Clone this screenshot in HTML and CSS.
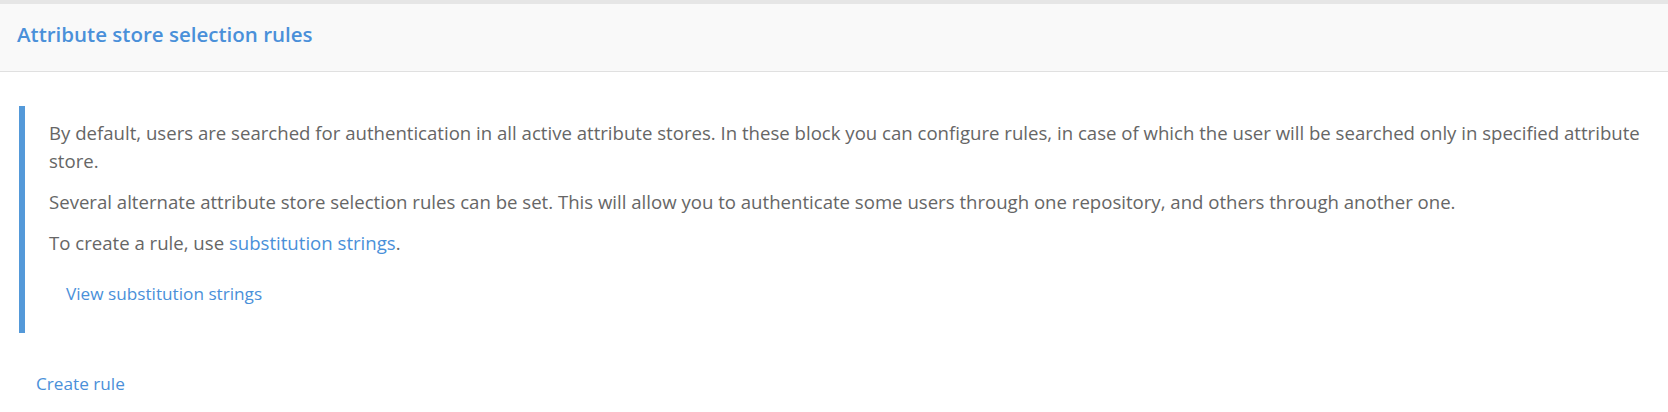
FILE: index.html
```html
<!DOCTYPE html>
<html lang="en">
<head>
<meta charset="utf-8">
<title>Attribute store selection rules</title>
<link rel="stylesheet" href="styles.css">
</head>
<body>
<div class="page">
  <div class="panel-header">
    <h2 class="panel-title">Attribute store selection rules</h2>
  </div>
  <div class="panel-body">
    <div class="note">
      <p>By default, users are searched for authentication in all active attribute stores. In these block you can configure rules, in case of which the user will be searched only in specified attribute store.</p>
      <p>Several alternate attribute store selection rules can be set. This will allow you to authenticate some users through one repository, and others through another one.</p>
      <p>To create a rule, use <a href="#" class="link">substitution strings</a>.</p>
      <a href="#" class="link view-link">View substitution strings</a>
    </div>
    <a href="#" class="link create-link">Create rule</a>
  </div>
</div>
</body>
</html>
```

FILE: styles.css
```css
html, body {
  margin: 0;
  padding: 0;
  background: #ffffff;
}
body {
  font-family: "Open Sans", "Liberation Sans", sans-serif;
  color: #666666;
}
.page {
  border-top: 4px solid #e6e6e6;
}
.panel-header {
  box-sizing: border-box;
  height: 68px;
  background: #f9f9f9;
  border-bottom: 1px solid #e0e0e0;
  padding: 16px 18px 0 17px;
}
.panel-title {
  margin: 0;
  font-size: 20.5px;
  line-height: 28px;
  font-weight: 600;
  color: #4a90d9;
}
.panel-body {
  padding: 34px 10px 20px 19px;
}
.note {
  border-left: 6px solid #5499d9;
  padding: 13px 0 27px 24px;
}
.note p {
  margin: 0 0 13px 0;
  font-size: 18.6px;
  line-height: 28px;
}
.link {
  color: #4a90d9;
  text-decoration: none;
}
.view-link {
  display: block;
  width: max-content;
  margin: 25px 0 0 17px;
  font-size: 17.2px;
  line-height: 24px;
}
.create-link {
  display: block;
  width: max-content;
  margin: 39px 0 0 17px;
  font-size: 17.2px;
  line-height: 24px;
}
```
